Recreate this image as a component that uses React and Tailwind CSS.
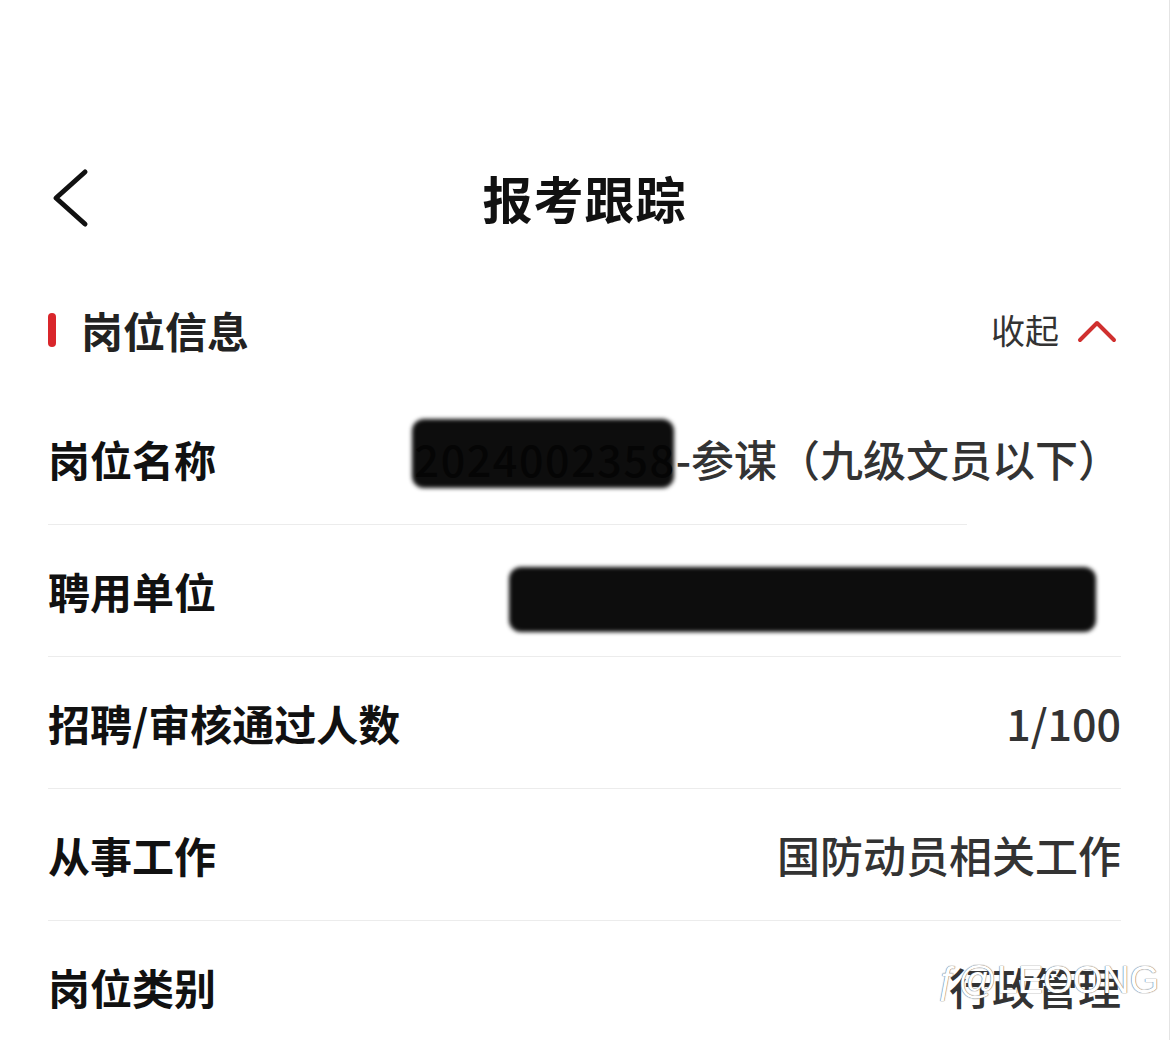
import React from 'react';

const rows = [
  { label: '岗位名称', kind: 'title' },
  { label: '聘用单位', kind: 'hidden' },
  { label: '招聘/审核通过人数', value: '1/100' },
  { label: '从事工作', value: '国防动员相关工作' },
  { label: '岗位类别', value: '行政管理', mark: true },
];

function BackIcon() {
  return (
    <svg width="40" height="60" viewBox="0 0 40 60" fill="none">
      <polyline points="33,4 4,30 33,56" stroke="#111" strokeWidth="5" strokeLinecap="round" strokeLinejoin="round" />
    </svg>
  );
}

function UpIcon() {
  return (
    <svg width="40" height="26" viewBox="0 0 40 26" fill="none">
      <polyline points="3,22 20,5 37,22" stroke="#d0302f" strokeWidth="4" strokeLinecap="round" strokeLinejoin="round" />
    </svg>
  );
}

function Value({ row }) {
  if (row.kind === 'title') {
    return (
      <div className="text-[43px] font-medium text-[#333] leading-none whitespace-nowrap">
        <span className="relative inline-block">
          <span className="absolute -left-[3px] right-[2px] -top-[18px] -bottom-[8px] bg-[#0d0d0d] rounded-xl blur-[2px]" />
          <span className="relative text-[#050505] tracking-[1.6px]">2024002358</span>
        </span>
        <span>-参谋（九级文员以下）</span>
      </div>
    );
  }
  if (row.kind === 'hidden') {
    return <div className="w-[587px] h-[65px] mr-[25px] mt-[18px] bg-[#0d0d0d] rounded-xl blur-[2px]" />;
  }
  return (
    <div className="relative text-[43px] font-medium text-[#333] leading-none">
      {row.value}
      {row.mark && (
        <span className="absolute -left-[12px] top-[-4px] text-[38px] font-normal text-white whitespace-nowrap [text-shadow:0_0_1px_#666,0_0_1px_#666] [font-family:'Liberation_Sans',sans-serif]">
          ƒ@LEOONG
        </span>
      )}
    </div>
  );
}

export default function App() {
  return (
    <div className="w-[1170px] h-[1040px] overflow-hidden bg-white border-r border-[#e4e4e4] [font-family:'Noto_Sans_CJK_SC','Noto_Sans',sans-serif]">
      {/* 顶部导航 */}
      <div className="mt-[140px] h-[114px] px-[52px] relative flex items-center justify-center">
        <div className="absolute left-[52px] top-[28px]">
          <BackIcon />
        </div>
        <h1 className="text-[50px] font-bold text-[#111] leading-none tracking-[1px]">报考跟踪</h1>
      </div>

      {/* 岗位信息 */}
      <div className="h-[139px] pt-[12px] pl-[48px] pr-[52px] flex items-center justify-between">
        <div className="flex items-center">
          <span className="w-[8px] h-[34px] rounded-full bg-[#d9262b]" />
          <span className="ml-[25px] text-[42px] font-bold text-[#222] leading-none">岗位信息</span>
        </div>
        <div className="flex items-center">
          <span className="text-[34px] text-[#333] leading-none">收起</span>
          <span className="ml-[18px] mt-[2px]"><UpIcon /></span>
        </div>
      </div>

      <div className="pl-[48px] pr-[48px]">
        {rows.map((row, i) => (
          <div
            key={row.label}
            className={`h-[132px] flex items-center justify-between border-b border-[#ececec] ${i === 0 ? 'mr-[154px]' : ''}`}
          >
            <span className="text-[42px] font-bold text-[#111] leading-none whitespace-nowrap">{row.label}</span>
            <div className={i === 0 ? '-mr-[154px]' : ''}>
              <Value row={row} />
            </div>
          </div>
        ))}
      </div>
    </div>
  );
}
